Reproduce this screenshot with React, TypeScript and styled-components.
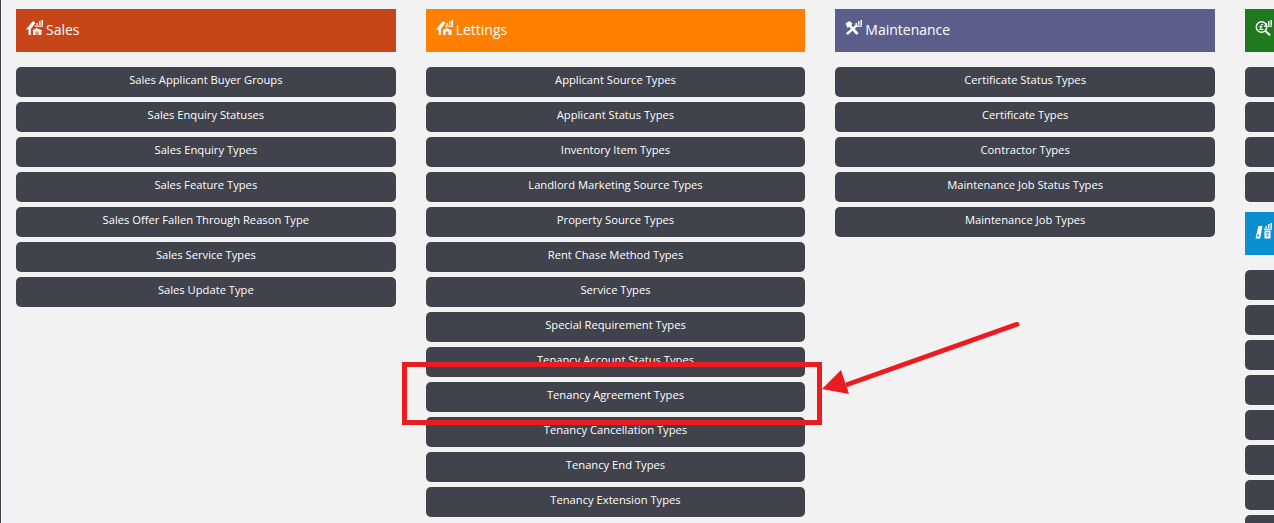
import styled, { createGlobalStyle } from "styled-components";

const GlobalStyle = createGlobalStyle`
  html, body {
    margin: 0;
    height: 100%;
    overflow: hidden;
    background: #f2f2f2;
  }
`;

type Group = { title: string; color: string; icon: "house" | "tools" | "money" | "keys"; items: string[] };

const blank = (n: number) => Array.from({ length: n }, () => "");

const columns: Group[][] = [
  [
    {
      title: "Sales",
      color: "#c64519",
      icon: "house",
      items: [
        "Sales Applicant Buyer Groups",
        "Sales Enquiry Statuses",
        "Sales Enquiry Types",
        "Sales Feature Types",
        "Sales Offer Fallen Through Reason Type",
        "Sales Service Types",
        "Sales Update Type",
      ],
    },
  ],
  [
    {
      title: "Lettings",
      color: "#ff8000",
      icon: "house",
      items: [
        "Applicant Source Types",
        "Applicant Status Types",
        "Inventory Item Types",
        "Landlord Marketing Source Types",
        "Property Source Types",
        "Rent Chase Method Types",
        "Service Types",
        "Special Requirement Types",
        "Tenancy Account Status Types",
        "Tenancy Agreement Types",
        "Tenancy Cancellation Types",
        "Tenancy End Types",
        "Tenancy Extension Types",
      ],
    },
  ],
  [
    {
      title: "Maintenance",
      color: "#5b5d8a",
      icon: "tools",
      items: [
        "Certificate Status Types",
        "Certificate Types",
        "Contractor Types",
        "Maintenance Job Status Types",
        "Maintenance Job Types",
      ],
    },
  ],
  [
    { title: "", color: "#1f7a1f", icon: "money", items: blank(4) },
    { title: "", color: "#0a8fd0", icon: "keys", items: blank(8) },
  ],
];

// small bar chart that sits top right on every header icon
function Chart() {
  return <path d="M10.5 5V3H12V5ZM13 5V1H14.5V5ZM15.5 5V0H17V5ZM9 5.5H17V6.7H9Z" fill="#fff" />;
}

function GroupIcon({ name }: { name: Group["icon"] }) {
  return (
    <svg width="17" height="16" viewBox="0 0 17 16">
      {name === "house" && (
        <>
          <path d="M0 9.5L7 1L9.5 3L4.8 9V15H2.6V9.5Z" fill="#fff" />
          <path d="M6 10.5L10.5 8L16.5 10.5H15.5V15H7V10.5Z" fill="#fff" fillOpacity="0.9" />
          <path d="M9.5 11.5H12.5V15H9.5Z" fill="#d98a60" />
          <Chart />
        </>
      )}
      {name === "tools" && (
        <>
          <path d="M0.5 3.5L4.5 1L7.5 3.5L6.2 5L13.5 13L11.5 15L4 6.8L2.5 8Z" fill="#fff" />
          <path d="M11.5 4.5L1 13L2.8 15L12.8 6Z" fill="#fff" />
          <Chart />
        </>
      )}
      {name === "money" && (
        <>
          <circle cx="6.5" cy="7" r="5.2" fill="none" stroke="#fff" strokeWidth="1.5" />
          <path d="M10.5 11L15 15.2" stroke="#fff" strokeWidth="2" />
          <path d="M8.3 4.6C6.6 3.7 5.4 5 5.8 7V9.2M4.2 6.8H7.6M4.2 9.4H8.4" stroke="#fff" strokeWidth="1" fill="none" />
          <Chart />
        </>
      )}
      {name === "keys" && (
        <>
          <path d="M3.5 3H7.5L5.2 15.5H0.5Z" fill="#fff" />
          <path d="M9.5 7.5H15.5V15.5H9.5Z" fill="#fff" />
          <circle cx="3.2" cy="12.6" r="1.1" fill="#0a8fd0" />
          <circle cx="12.5" cy="12.6" r="1.1" fill="#0a8fd0" />
          <path d="M11 10H14" stroke="#0a8fd0" strokeWidth="1.2" />
          <Chart />
        </>
      )}
    </svg>
  );
}

export default function App() {
  return (
    <>
      <GlobalStyle />
      <Page>
        <Columns>
          {columns.map((groups, i) => (
            <Column key={i}>
              {groups.map((group, j) => (
                <section key={j}>
                  <Header $color={group.color}>
                    <GroupIcon name={group.icon} />
                    <Title>{group.title}</Title>
                  </Header>
                  <List>
                    {group.items.map((item, k) => (
                      <LinkButton key={k}>{item}</LinkButton>
                    ))}
                  </List>
                </section>
              ))}
            </Column>
          ))}
        </Columns>
        <Highlight />
        <Arrow width="220" height="90" viewBox="0 0 220 90">
          <path d="M197 1.5L24 63" stroke="#e91c22" strokeWidth="4.8" fill="none" />
          <path d="M0 67L19 48L27 72Z" fill="#e91c22" />
        </Arrow>
      </Page>
    </>
  );
}

const Page = styled.div`
  position: relative;
  height: 523px;
  overflow: hidden;
  box-sizing: border-box;
  border-left: 1px solid #3f414b;
  padding: 9px 0 0 15px;
  font-family: "Open Sans", "Liberation Sans", sans-serif;
`;

const Columns = styled.div`
  display: grid;
  grid-template-columns: repeat(4, 379.67px);
  column-gap: 30px;
  align-items: start;
`;

const Column = styled.div`
  display: flex;
  flex-direction: column;
  gap: 10px;
`;

const Header = styled.div<{ $color: string }>`
  display: flex;
  align-items: center;
  gap: 3px;
  height: 43px;
  padding: 0 10px;
  background: ${(p) => p.$color};
  color: #fff;
  font-size: 14px;

  svg {
    margin-top: -5px;
  }
`;

const Title = styled.span`
  padding-bottom: 2px;
`;

const List = styled.div`
  display: flex;
  flex-direction: column;
  gap: 5px;
  margin-top: 15px;
`;

const LinkButton = styled.div`
  height: 30px;
  line-height: 26px;
  border-radius: 5px;
  background: #40424c;
  color: #fff;
  font-size: 11.2px;
  font-weight: 500;
  text-align: center;
`;

const Highlight = styled.div`
  position: absolute;
  left: 401px;
  top: 362px;
  width: 410px;
  height: 53px;
  border: 5px solid #e91c22;
`;

const Arrow = styled.svg`
  position: absolute;
  left: 821px;
  top: 322px;
`;
